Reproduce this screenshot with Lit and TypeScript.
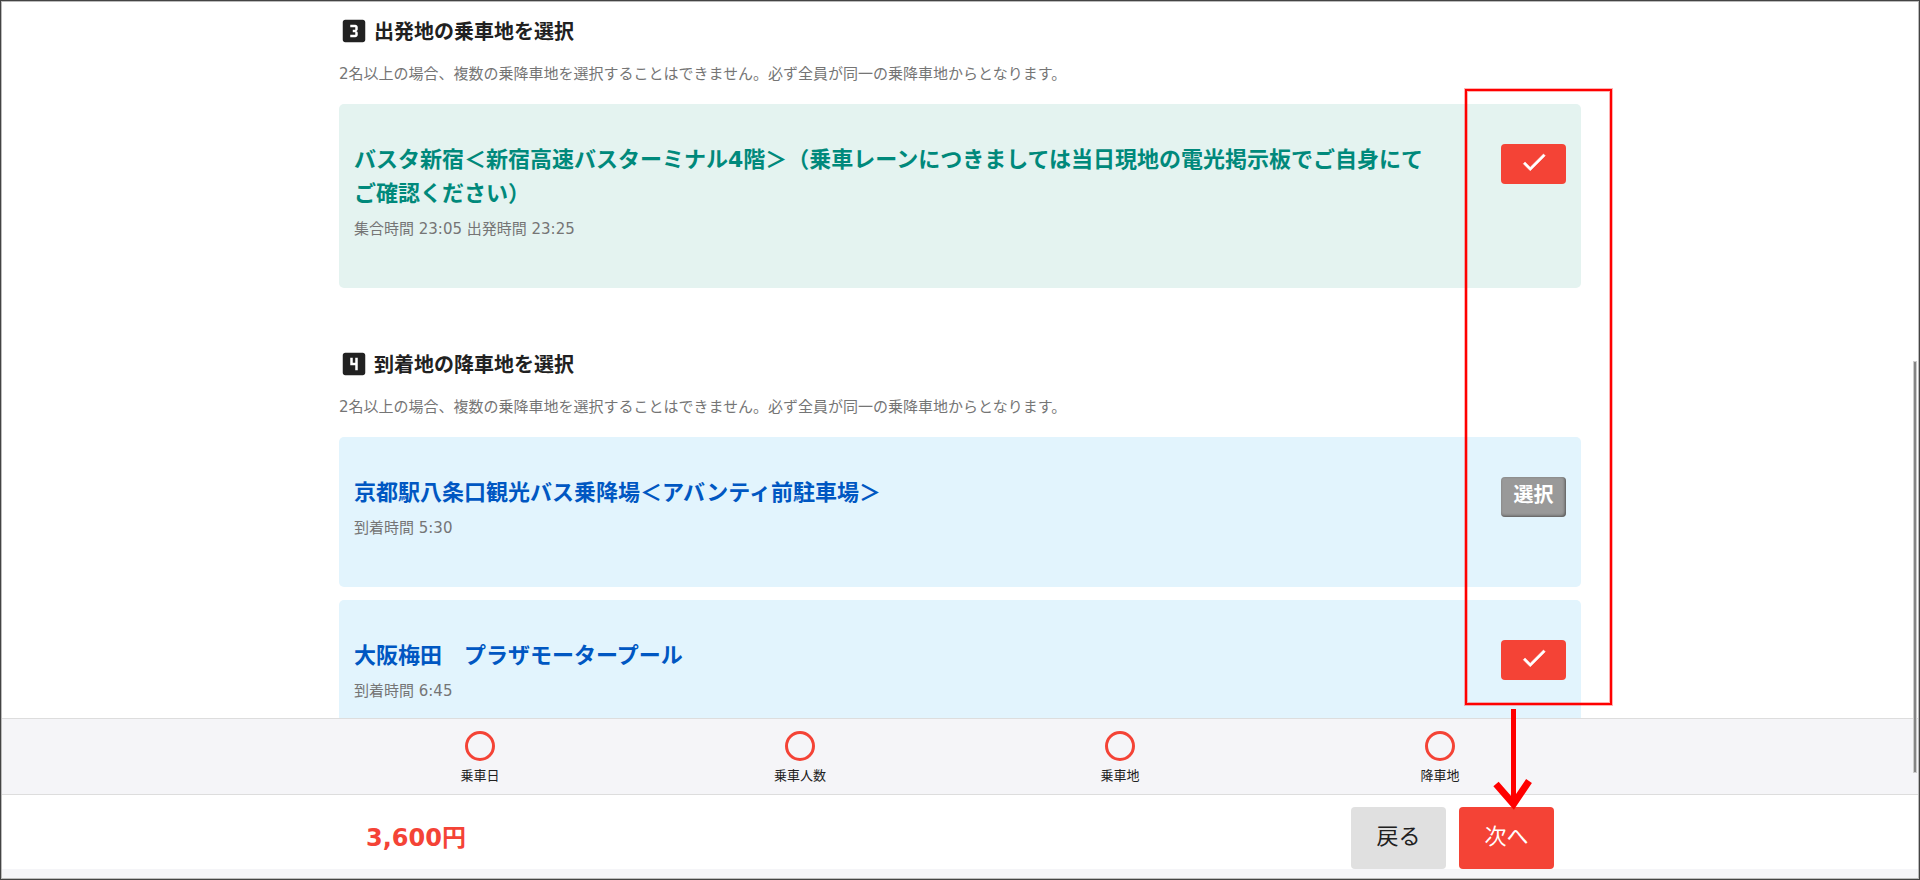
import { LitElement, html, css, svg, nothing } from "lit";
import { customElement, property } from "lit/decorators.js";

interface Stop {
  name: string;
  time: string;
  selected: boolean;
}

const digits = {
  3: svg`<path d="M19 3H5c-1.1 0-2 .9-2 2v14c0 1.1.9 2 2 2h14c1.1 0 2-.9 2-2V5c0-1.1-.9-2-2-2zm-4 7.5c0 .83-.67 1.5-1.5 1.5.83 0 1.5.67 1.5 1.5V15c0 1.11-.9 2-2 2H9v-2h4v-2h-2v-2h2V9H9V7h4c1.1 0 2 .89 2 2v1.5z"/>`,
  4: svg`<path d="M19 3H5c-1.1 0-2 .9-2 2v14c0 1.1.9 2 2 2h14c1.1 0 2-.9 2-2V5c0-1.1-.9-2-2-2zm-4 14h-2v-4H9V7h2v4h2V7h2v10z"/>`,
};

@customElement("stop-card")
class StopCard extends LitElement {
  @property({ attribute: false }) stop!: Stop;
  @property() tone = "green";

  static styles = css`
    :host { display: block; }
    .card {
      display: flex;
      align-items: flex-start;
      justify-content: space-between;
      gap: 60px;
      padding: 39px 15px 47px;
      border-radius: 5px;
    }
    .green { background: #e4f3f0; --title: #00897b; }
    .blue { background: #e2f4fd; --title: #0057c2; }
    .name {
      margin: 0 0 7px;
      font-size: 22px;
      line-height: 34px;
      color: var(--title);
    }
    .time { margin: 0; line-height: 23px; color: #757575; }
    .pick {
      flex: none;
      width: 65px;
      height: 40px;
      margin-top: 1px;
      padding: 0 0 4px;
      border: 0;
      border-radius: 4px;
      background: #999;
      box-shadow: inset -1px -1px 3px rgba(0, 0, 0, 0.45);
      color: #fff;
      font: inherit;
      font-size: 20px;
      font-weight: 700;
      display: flex;
      align-items: center;
      justify-content: center;
    }
    .on { background: #f44336; box-shadow: none; }
    .check { width: 30px; height: 30px; fill: #fff; }
  `;

  render() {
    const { name, time, selected } = this.stop;
    return html`
      <div class="card ${this.tone}">
        <div>
          <h3 class="name">${name}</h3>
          <p class="time">${time}</p>
        </div>
        <button
          class="pick ${selected ? "on" : ""}"
          type="button"
          aria-pressed=${selected}
          aria-label=${selected ? "選択" : nothing}
        >
          ${selected
            ? html`<svg class="check" viewBox="0 0 24 24" aria-hidden="true">
                <path d="M9 16.17L4.83 12l-1.42 1.41L9 19 21 7l-1.41-1.41z" stroke="#fff" stroke-width=".4" />
              </svg>`
            : "選択"}
        </button>
      </div>
    `;
  }
}

@customElement("app-root")
class AppRoot extends LitElement {
  static styles = css`
    :host {
      display: flex;
      flex-direction: column;
      position: relative;
      box-sizing: border-box;
      height: 100vh;
      overflow: hidden;
      border: 1px solid #444;
      background: #fff;
      color: #212121;
      font: 15px/22px "DejaVu Sans", "Noto Sans CJK JP", sans-serif;
    }
    .frame {
      position: absolute;
      inset: 0;
      border: 1px solid #bbb;
      pointer-events: none;
    }
    .content {
      flex: 1;
      min-height: 0;
      overflow: hidden;
    }
    .column {
      max-width: 1242px;
      margin: 0 auto;
      padding-top: 15px;
    }
    .section { margin-bottom: 61px; }
    .heading {
      display: flex;
      align-items: flex-start;
      gap: 5px;
      margin: 0 0 15px;
      font-size: 20px;
      line-height: 32px;
    }
    .number { width: 30px; height: 30px; fill: #212121; }
    .note { margin: 0 0 19px; color: #757575; }
    .cards { display: grid; gap: 13px; }
    .steps {
      border-top: 1px solid #ddd;
      border-bottom: 1px solid #ddd;
      background: #f5f5f8;
    }
    .step-list {
      display: grid;
      grid-template-columns: repeat(4, 1fr);
      max-width: 1280px;
      margin: 0 auto;
      padding: 9px 0 8px;
      list-style: none;
    }
    .step {
      display: flex;
      flex-direction: column;
      align-items: center;
      gap: 2px;
      font-size: 13px;
      line-height: 20px;
    }
    .ring { width: 36px; height: 36px; fill: none; stroke: #f44336; stroke-width: 2; }
    .checkout { border-bottom: 10px solid #f5f5f8; }
    .bar {
      display: flex;
      align-items: center;
      gap: 13px;
      max-width: 1188px;
      margin: 0 auto;
      padding-top: 12px;
    }
    .price {
      flex: 1;
      margin: 0;
      color: #f44336;
      font-size: 24px;
      font-weight: 700;
    }
    .action {
      width: 95px;
      height: 62px;
      padding: 0 0 2px;
      border: 0;
      border-radius: 4px;
      background: #e0e0e0;
      color: #212121;
      font: inherit;
      font-size: 22px;
    }
    .primary { background: #f44336; color: #fff; }
    .thumb {
      position: absolute;
      top: 361px;
      right: 3px;
      width: 2px;
      height: 410px;
      background: #858585;
      box-shadow: 0 0 0 1px #ccc;
    }
    .mark {
      position: absolute;
      top: 88px;
      left: calc(50% + 505px);
      width: 147px;
      height: 721px;
      overflow: visible;
      fill: none;
      stroke: #f00;
      pointer-events: none;
    }
  `;

  private departures: Stop[] = [
    {
      name: "バスタ新宿＜新宿高速バスターミナル4階＞（乗車レーンにつきましては当日現地の電光掲示板でご自身にてご確認ください）",
      time: "集合時間 23:05 出発時間 23:25",
      selected: true,
    },
  ];

  private arrivals: Stop[] = [
    { name: "京都駅八条口観光バス乗降場＜アバンティ前駐車場＞", time: "到着時間 5:30", selected: false },
    { name: "大阪梅田　プラザモータープール", time: "到着時間 6:45", selected: true },
  ];

  private section(digit: 3 | 4, title: string, tone: string, stops: Stop[]) {
    return html`
      <section class="section">
        <h2 class="heading">
          <svg class="number" viewBox="0 0 24 24" role="img" aria-label=${digit}>${digits[digit]}</svg>
          ${title}
        </h2>
        <p class="note">
          2名以上の場合、複数の乗降車地を選択することはできません。必ず全員が同一の乗降車地からとなります。
        </p>
        <div class="cards">
          ${stops.map((stop) => html`<stop-card .stop=${stop} tone=${tone}></stop-card>`)}
        </div>
      </section>
    `;
  }

  render() {
    return html`
      <main class="content">
        <div class="column">
          ${this.section(3, "出発地の乗車地を選択", "green", this.departures)}
          ${this.section(4, "到着地の降車地を選択", "blue", this.arrivals)}
        </div>
      </main>
      <nav class="steps">
        <ol class="step-list">
          ${["乗車日", "乗車人数", "乗車地", "降車地"].map(
            (label) => html`
              <li class="step">
                <svg class="ring" viewBox="0 0 24 24" aria-hidden="true"><circle cx="12" cy="12" r="9" /></svg>
                ${label}
              </li>
            `
          )}
        </ol>
      </nav>
      <footer class="checkout">
        <div class="bar">
          <p class="price">3,600円</p>
          <button class="action" type="button">戻る</button>
          <button class="action primary" type="button">次へ</button>
        </div>
      </footer>
      <div class="frame"></div>
      <div class="thumb"></div>
      <svg class="mark" viewBox="0 0 147 721" aria-hidden="true">
        <rect x="1" y="1" width="145" height="614" stroke-width="4" opacity=".3" />
        <rect x="1" y="1" width="145" height="614" stroke-width="2" />
        <path d="M48.5 620V716" stroke-width="5" />
        <path d="M31 695L48.5 715 64 692" stroke-width="7" />
      </svg>
    `;
  }
}
